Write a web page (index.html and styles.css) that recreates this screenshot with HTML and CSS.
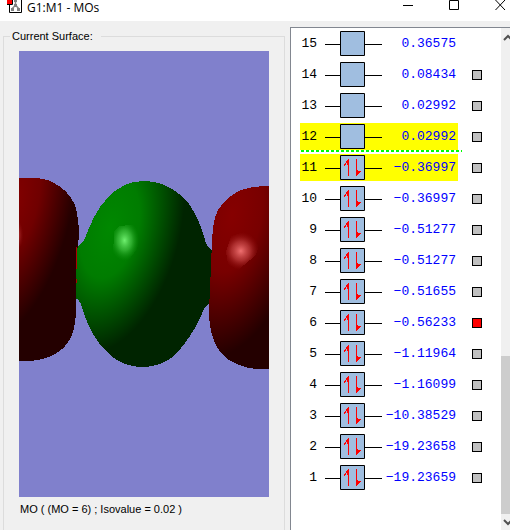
FILE: index.html
```html
<!DOCTYPE html>
<html lang="en">
<head>
    <meta charset="UTF-8">
    <meta name="viewport" content="width=device-width, initial-scale=1.0">
    <title>G1:M1 - MOs</title>
    <link rel="stylesheet" href="styles.css">
</head>
<body>

<header class="titlebar">
    <svg class="app-icon" width="16" height="13" viewBox="0 0 16 13">
        <path d="M2.500 0V12.500H14.500V0" fill="#fff" stroke="#000"/>
        <path d="M8.500 0V5L5 9M8.500 5L12 9" fill="none" stroke="#888" stroke-width="1.500"/>
        <path d="M7 4h3v3H7zM4 8h3v3H4zM10 8h3v3h-3zM7 0h3v2H7z" fill="#808080"/>
        <path d="M0 0h5v5H0z" fill="#f00"/>
        <path d="M0 4.500H5.500V0" fill="none" stroke="#000"/>
    </svg>
    <h1>G1:M1 - MOs</h1>
    <div class="window-buttons">
        <button type="button" aria-label="Minimize"><svg width="11" height="11"><path d="M0 5.500H10" stroke="#000"/></svg></button>
        <button type="button" aria-label="Maximize"><svg width="11" height="11"><path d="M.5 .5H9.500V9.500H.5z" fill="none" stroke="#000"/></svg></button>
        <button type="button" aria-label="Close"><svg width="11" height="11"><path d="M.5 0L10 10M10 0L.5 10" stroke="#000"/></svg></button>
    </div>
</header>

<main>
    <fieldset class="surface">
        <legend>Current Surface:</legend>
        <svg class="viewport" viewBox="19 51 250 446" preserveAspectRatio="xMidYMid slice">
            <defs>
                <radialGradient id="leftLobe" gradientUnits="userSpaceOnUse" cx="0" cy="0" r="1" gradientTransform="translate(15 200) rotate(12) scale(58 140)">
                    <stop offset="0" stop-color="#820000"/>
                    <stop offset=".4" stop-color="#700000"/>
                    <stop offset="1" stop-color="#240000"/>
                </radialGradient>
                <radialGradient id="centerLobe" gradientUnits="userSpaceOnUse" cx="0" cy="0" r="1" gradientTransform="translate(110 228) rotate(14) scale(70 128)">
                    <stop offset="0" stop-color="#008800"/>
                    <stop offset=".4" stop-color="#007c00"/>
                    <stop offset="1" stop-color="#002400"/>
                </radialGradient>
                <radialGradient id="rightLobe" gradientUnits="userSpaceOnUse" cx="0" cy="0" r="1" gradientTransform="translate(232 215) rotate(12) scale(74 145)">
                    <stop offset="0" stop-color="#860000"/>
                    <stop offset=".4" stop-color="#780000"/>
                    <stop offset="1" stop-color="#240000"/>
                </radialGradient>
                <radialGradient id="greenShine" cx=".4" cy=".4">
                    <stop offset="0" stop-color="#70f070"/>
                    <stop offset=".5" stop-color="#40c040" stop-opacity=".7"/>
                    <stop offset="1" stop-color="#109010" stop-opacity="0"/>
                </radialGradient>
                <radialGradient id="redShine" cx=".4">
                    <stop offset="0" stop-color="#f07070"/>
                    <stop offset=".5" stop-color="#c04040" stop-opacity=".7"/>
                    <stop offset="1" stop-color="#901010" stop-opacity="0"/>
                </radialGradient>
            </defs>
            <path fill="url(#centerLobe)" d="M143 181C130 181 119 187 110 195C95 210 90 226 85 238Q82 244 77 247L75 298Q81 300 83 311C89 329 96 341 107 352Q122 367 143 367Q161 367 175 355Q191 338 201 316Q204 306 212 301V250Q206 247 204 236Q198 217 189 204Q170 181 143 181z"/>
            <path fill="url(#leftLobe)" d="M19 178Q42 176 54 183Q68 190 75 205Q79 218 79 237Q76 252 76 290V312C75 337 67 347 55 354Q41 362 19 361z"/>
            <path fill="url(#rightLobe)" d="M269 186Q249 186 237 192Q220 202 215 217C211 235 212 250 211 266L209 310C209 340 219 353 229 360Q247 371 269 369z"/>
            <path d="M76.500 247V269M76.500 279V283" stroke="#b00000"/>
            <path fill="url(#greenShine)" d="M114 231L120 226L138 224L142 233L137 249L125 265L113 257z"/>
            <path fill="url(#redShine)" d="M226 252L231 236L244 232L263 234L256 255L238 270L228 264z"/>
            <ellipse cx="17" cy="235" rx="8" ry="16" fill="url(#redShine)" opacity=".7"/>
        </svg>
        <p class="caption">MO ( (MO = 6) ; Isovalue = 0.02 )</p>
    </fieldset>

    <section class="orbitals">
        <ul id="levels"></ul>
        <div class="scrollbar">
            <button type="button" aria-label="Scroll up"><svg width="9" height="8"><path d="M3 7L7 3L11 7" fill="none" stroke="#505050" stroke-width="2"/></svg></button>
            <div class="thumb"></div>
            <button type="button" aria-label="Scroll down"><svg width="9" height="8"><path d="M3 1L7 5L11 1" fill="none" stroke="#505050" stroke-width="2"/></svg></button>
        </div>
    </section>
</main>

<script src="script.js"></script>
</body>
</html>
```

FILE: styles.css
```css
* {
    box-sizing: border-box;
}

body {
    display: flex;
    flex-direction: column;
    height: 100vh;
    margin: 0;
    overflow: hidden;
    background-color: #F0F0F0;
    color: #000000;
    font-family: "Liberation Sans", Arial, sans-serif;
    font-size: 11px;
}

button {
    display: flex;
    padding: 0;
    border: none;
    background: none;
}

.titlebar {
    display: flex;
    align-items: flex-start;
    flex-shrink: 0;
    height: 21px;
    padding-left: 7px;
    background-color: #FFFFFF;
}

.titlebar h1 {
    flex: 1;
    margin: 0 0 0 4px;
    font-family: "Open Sans", "Noto Sans", sans-serif;
    font-size: 12px;
    font-weight: normal;
    line-height: 16px;
}

.window-buttons {
    display: flex;
    gap: 35px;
    padding-right: 4px;
}

main {
    display: flex;
    flex: 1;
    min-height: 0;
}

.surface {
    display: flex;
    flex-direction: column;
    flex: 1;
    min-width: 0;
    margin: 8px 5px 0 3px;
    padding: 8px 15px 14px;
    border: 1px solid #DCDCDC;
    border-bottom: none;
}

.surface legend {
    margin-left: -9px;
    padding: 0 8px 0 2px;
    line-height: 14px;
}

.viewport {
    display: block;
    flex: 1;
    width: 100%;
    min-height: 0;
    background-color: #8080CC;
    shape-rendering: crispEdges;
}

.caption {
    margin: 0;
    padding: 6px 1px 0;
    line-height: 13px;
}

.orbitals {
    display: flex;
    flex: 0 0 220px;
    margin-top: 6px;
    border-top: 1px solid #828790;
    border-left: 1px solid #828790;
    background-color: #FFFFFF;
}

#levels {
    flex: 1;
    margin: 0;
    padding: 2px 0 0 9px;
    list-style: none;
}

.level {
    display: flex;
    align-items: center;
    justify-content: space-between;
    height: 27px;
    margin-bottom: 4px;
    padding-right: 19px;
    font-family: "Liberation Mono", "Courier New", monospace;
    font-size: 13px;
}

.level label {
    display: flex;
    align-items: center;
    width: 158px;
    height: 27px;
}

.frontier label {
    background-color: #FFFF00;
}

/* gap between occupied and empty levels */
.lumo {
    position: relative;
}

.lumo::after {
    position: absolute;
    left: 1px;
    bottom: -2px;
    width: 161px;
    height: 2px;
    background: repeating-linear-gradient(90deg, #00FF00 0 3px, transparent 3px 5px);
    content: "";
}

.number {
    width: 17px;
    text-align: right;
}

.diagram {
    flex-shrink: 0;
    margin-left: 8px;
}

.energy {
    flex: 1;
    padding-right: 2px;
    color: #0000FF;
    text-align: right;
    white-space: nowrap;
}

.level input {
    appearance: none;
    width: 10px;
    height: 10px;
    margin: 0;
    border: 1px solid #000000;
    background-color: #C0C0C0;
}

.level input:checked {
    background-color: #FF0000;
}

.scrollbar {
    display: flex;
    flex-direction: column;
    justify-content: space-between;
    width: 9px;
    padding: 5px 0 3px;
    background-color: #F0F0F0;
}

.thumb {
    height: 158px;
    margin: auto 0 5px;
    background-color: #CDCDCD;
}
```

FILE: script.js
```js
var levels = [
    [15, "0.36575"], [14, "0.08434"], [13, "0.02992"], [12, "0.02992"],
    [11, "−0.36997"], [10, "−0.36997"], [9, "−0.51277"], [8, "−0.51277"],
    [7, "−0.51655"], [6, "−0.56233"], [5, "−1.11964"], [4, "−1.16099"],
    [3, "−10.38529"], [2, "−19.23658"], [1, "−19.23659"]
];
var homo = 11;
var selected = 6;

var arrows = '<path d="M23 4H24V21H23V10H22V8H21V10H20V11H19V9H20V8H21V6H22V5H23z" fill="#f00"/>' +
    '<path d="M31 4H32V15H33V16H36V15H36V17H35V18H34V19H33V20H32V21H31z" fill="#f00"/>';

document.getElementById("levels").innerHTML = levels.map(function (level) {
    var n = level[0];
    var classes = "level";
    if (n === homo || n === homo + 1) classes += " frontier";
    if (n === homo + 1) classes += " lumo";

    return `<li class="${classes}">
        <label for="mo${n}">
            <span class="number">${n}</span>
            <svg class="diagram" width="57" height="25">
                <path d="M0 13.5H57" stroke="#000"/>
                <path d="M15.5 .5H39.5V24.5H15.5z" fill="#A0BEE0" stroke="#000"/>
                ${n <= homo ? arrows : ""}
            </svg>
            <span class="energy">${level[1]}</span>
        </label>
        ${n < 15 ? `<input type="checkbox" id="mo${n}" ${n === selected ? "checked" : ""}>` : ""}
    </li>`;
}).join("");
```
